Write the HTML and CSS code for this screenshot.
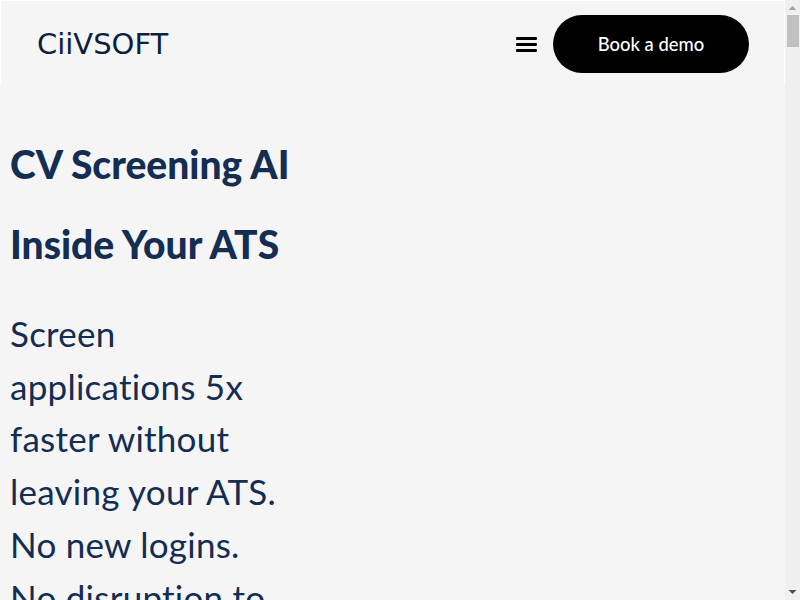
FILE: index.html
```html
<!DOCTYPE html>
<html lang="en">
  <head>
    <meta charset="UTF-8" />
    <meta name="viewport" content="width=device-width, initial-scale=1.0" />
    <title>CiiVSOFT</title>
    <link rel="stylesheet" href="styles.css">
  </head>
  <body>
    <div class="page">
      <header class="site-header">
        <a class="logo" href="#">CiiVSOFT</a>
        <div class="header-actions">
          <button class="menu-toggle" aria-label="Menu">
            <svg width="21" height="15" viewBox="0 0 21 15">
              <rect x="0" y="0" width="21" height="3" rx="1" />
              <rect x="0" y="6" width="21" height="3" rx="1" />
              <rect x="0" y="12" width="21" height="3" rx="1" />
            </svg>
          </button>
          <a class="demo-button" href="#">Book a demo</a>
        </div>
      </header>

      <section class="hero">
        <h1>CV Screening AI</h1>
        <h1>Inside Your ATS</h1>
        <p>
          Screen applications 5x faster without leaving your ATS. No new logins.
          No disruption to your workflow.
        </p>
      </section>
    </div>

    <!-- Window scrollbar -->
    <div class="scrollbar">
      <svg class="arrow" width="15" height="15" viewBox="0 0 15 15">
        <path d="M3.5 10 L7.5 6 L11.5 10 Z" />
      </svg>
      <div class="track">
        <div class="thumb"></div>
      </div>
      <svg class="arrow" width="15" height="15" viewBox="0 0 15 15">
        <path d="M3.5 5 L7.5 9 L11.5 5 Z" />
      </svg>
    </div>
  </body>
</html>
```

FILE: styles.css
```css
/* Global Styles */
* {
  margin: 0;
  padding: 0;
  box-sizing: border-box;
}

body {
  display: flex;
  height: 600px;
  overflow: hidden;
  font-family: "Lato", "Noto Sans", sans-serif;
  font-variant-ligatures: none;
  background-color: #f5f5f5;
  color: #142d52;
}

.page {
  flex: 1;
  min-width: 0;
  overflow: hidden;
}

/* Header */
.site-header {
  display: flex;
  align-items: center;
  justify-content: space-between;
  height: 84px;
  padding: 3px 35px 0 36px;
  border: 1px solid #ffffff;
  border-bottom: none;
}

.logo {
  font-family: "DejaVu Sans", sans-serif;
  font-size: 29px;
  color: #0d1f3c;
  text-decoration: none;
}

.header-actions {
  display: flex;
  align-items: center;
  gap: 16px;
}

.menu-toggle {
  display: flex;
  background: none;
  border: none;
}

.demo-button {
  display: flex;
  align-items: center;
  justify-content: center;
  width: 196px;
  height: 58px;
  background-color: #000000;
  border-radius: 29px;
  color: #ffffff;
  font-size: 18.4px;
  font-weight: 500;
  text-decoration: none;
}

/* Hero */
.hero {
  width: 290px;
  padding: 50px 0 0 10px;
}

.hero h1 {
  font-size: 39px;
  font-weight: 900;
  line-height: 60px;
  margin-bottom: 20px;
  white-space: nowrap;
}

.hero p {
  font-size: 35px;
  line-height: 52.7px;
  letter-spacing: 0.25px;
  margin-top: 33px;
  padding-bottom: 40px;
}

/* Scrollbar */
.scrollbar {
  display: flex;
  flex-direction: column;
  flex: none;
  width: 15px;
  height: 600px;
  background-color: #f0f0f0;
}

.arrow {
  flex: none;
  fill: #a3a3a3;
}

.arrow:last-child {
  fill: #505050;
}

.track {
  flex: 1;
}

.thumb {
  height: 32px;
  margin: 0 1px 0 2px;
  background-color: #c1c1c1;
}
```
